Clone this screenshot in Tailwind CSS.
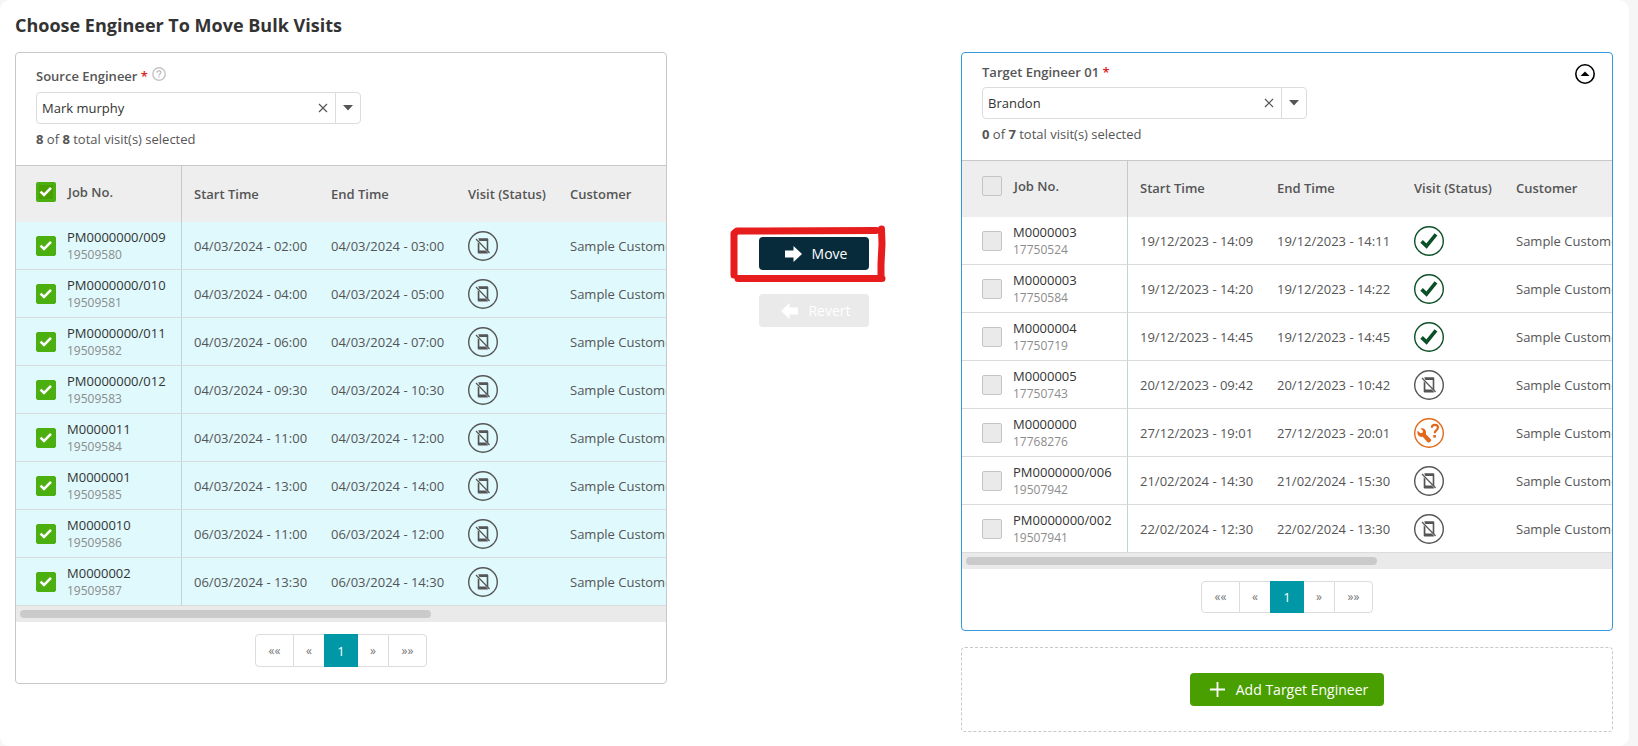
<!DOCTYPE html>
<html lang="en">
<head>
<meta charset="utf-8">
<meta name="viewport" content="width=device-width, initial-scale=1">
<title>Choose Engineer To Move Bulk Visits</title>
<script src="https://cdn.jsdelivr.net/npm/@tailwindcss/browser@4"></script>
</head>
<body class="min-h-screen bg-[#f6f6f6] pr-[9px] font-['Open_Sans',sans-serif] text-[13px] leading-5 text-[#555]">

<svg class="hidden" aria-hidden="true">
  <symbol id="i-nophone" viewBox="0 0 30 30">
    <circle cx="15" cy="15" r="14.3" fill="none" stroke="currentColor" stroke-width="1.4"/>
    <path d="M10.2 7.2h8.800c.8 0 1.300.5 1.300 1.200v12.400l-1.600-1.700v-9h-7.300z" fill="currentColor"/>
    <path d="M9.700 11.200l1.700 1.800v6.600h6.400l2.300 2.400c-.2.400-.6.600-1.100.6h-8c-.7 0-1.300-.5-1.300-1.200z" fill="currentColor"/>
    <path d="M8 8l13.600 14" stroke="currentColor" stroke-width="1.2" fill="none"/>
  </symbol>
  <symbol id="i-done" viewBox="0 0 30 30">
    <circle cx="15" cy="15" r="14.3" fill="none" stroke="currentColor" stroke-width="1.4"/>
    <path d="M7.6 15.400l4.900 4.700L22 8.400" fill="none" stroke="currentColor" stroke-width="3.600"/>
  </symbol>
  <symbol id="i-query" viewBox="0 0 30 30">
    <circle cx="15" cy="15" r="14.3" fill="none" stroke="currentColor" stroke-width="1.4"/>
    <path d="M5.2 11.2l2.7 2.6 2.1-.5.5-2-2.6-2.4c1.7-.5 3.6-.1 4.7 1.3 1 1.3 1.2 2.8.7 4.200l5 5.300c.6.6.6 1.500 0 2.100l-1.200 1c-.6.6-1.500.5-2-.1l-4.900-5.400c-1.500.4-3.200 0-4.200-1.300-1.200-1.300-1.400-3.200-.8-4.800z" transform="translate(-1.500 1.500)" fill="currentColor"/>
    <path d="M17.800 9.800c0-1.800 1.300-2.900 3.100-2.900s3.100 1.100 3.100 2.700c0 2.600-3.300 2.500-3.300 5.600" fill="none" stroke="currentColor" stroke-width="2.100"/>
    <rect x="19.300" y="17" width="2.600" height="2.600" fill="currentColor"/>
  </symbol>
  <symbol id="i-tick" viewBox="0 0 20 20">
    <path d="M4.500 9.600l3.500 3.300 7-7.100" fill="none" stroke="currentColor" stroke-width="2.600"/>
  </symbol>
  <symbol id="i-clear" viewBox="0 0 10 10">
    <path d="M1 1l8 8M9 1L1 9" fill="none" stroke="currentColor" stroke-width="1.200"/>
  </symbol>
  <symbol id="i-caret" viewBox="0 0 10 6">
    <path d="M0 0h10L5 5.500z" fill="currentColor"/>
  </symbol>
  <symbol id="i-arrow" viewBox="0 0 17 16">
    <path d="M0 4.500h8.500V0l8.500 8-8.500 8v-4.500H0z" fill="currentColor"/>
  </symbol>
</svg>

<main class="min-h-screen rounded-[10px] bg-white px-[15px] pt-[13px] pb-[14px] pr-4">
  <h1 class="mb-[15px] text-[18px] leading-6 font-bold text-[#333]">Choose Engineer To Move Bulk Visits</h1>

  <div class="grid grid-cols-[minmax(0,652fr)_minmax(0,294fr)_minmax(0,652fr)] items-start">

    <section class="overflow-hidden rounded border border-[#c8c8c8]">
      <div class="border-b border-[#c8c8c8] px-5 pt-[13px] pb-4">
        <div class="flex items-center gap-1">
          <label for="source" class="font-semibold">Source Engineer <span class="text-[#e02020]">*</span></label>
          <button type="button" aria-label="Help" class="-mt-1 text-[#c4c4c4]">
            <svg class="size-[14px]" viewBox="0 0 14 14" fill="none" stroke="currentColor" stroke-width="1.400"><circle cx="7" cy="7" r="6.200"/><path d="M5.100 5.700c0-1.200.8-1.900 1.900-1.900s1.900.7 1.900 1.700c0 1.300-1.900 1.300-1.900 2.900M7 9.200v1.400"/></svg>
          </button>
        </div>
        <div class="mt-[6px] flex h-8 max-w-[325px] rounded border border-[#dcdcdc]">
          <input id="source" type="text" value="Mark murphy" class="min-w-0 flex-1 bg-transparent pl-[5px] text-[#333] outline-none">
          <button type="button" aria-label="Clear source engineer" class="grid w-6 place-items-center"><svg class="size-[10px]"><use href="#i-clear"/></svg></button>
          <button type="button" aria-label="Show engineers" class="grid w-[25px] place-items-center border-l border-[#dcdcdc]"><svg class="h-[6px] w-[10px]"><use href="#i-caret"/></svg></button>
        </div>
        <p class="mt-[5px]"><b>8</b> of <b>8</b> total visit(s) selected</p>
      </div>
      <div class="overflow-hidden">
        <table class="w-[1014px] table-fixed border-separate border-spacing-0 text-left">
          <colgroup><col class="w-[166px]"><col class="w-[137px]"><col class="w-[137px]"><col class="w-[102px]"><col></colgroup>
          <thead class="bg-[#eee]">
            <tr class="h-14">
              <th class="border-r border-[#c8c8c8] pb-1 pl-5 font-semibold">
                <label class="flex items-center gap-3">
                  <span class="grid size-5"><input type="checkbox" checked class="peer col-start-1 row-start-1 size-5 appearance-none rounded-xs border border-[#c4c4c4] bg-[#eaeaea] checked:border-[3px] checked:border-[#4caf10] checked:bg-[#4a9f00]"><svg class="pointer-events-none col-start-1 row-start-1 hidden size-5 text-white peer-checked:block"><use href="#i-tick"/></svg></span>
                  Job No.
                </label>
              </th>
              <th class="pl-3 font-semibold">Start Time</th><th class="pl-3 font-semibold">End Time</th><th class="pl-3 font-semibold">Visit (Status)</th><th class="pl-3 font-semibold">Customer</th>
            </tr>
          </thead>
          <tbody id="source-rows" class="bg-[#dff9fd]"></tbody>
        </table>
      </div>
      <div class="h-4 bg-[#eaeaea] px-1 py-1"><div class="h-2 w-[64%] rounded-full bg-[#cacaca]"></div></div>
      <nav aria-label="Source visit pages" class="flex justify-center pt-3 pb-4">
        <div class="flex h-[33px] text-[12px] text-[#777]">
          <button type="button" aria-label="First page" class="w-[39px] rounded-l border border-[#dcdcdc]">««</button>
          <button type="button" aria-label="Previous page" class="w-[30px] border-y border-[#dcdcdc]">«</button>
          <button type="button" aria-current="page" class="w-[34px] bg-[#0098a6] text-[13px] font-medium text-white">1</button>
          <button type="button" aria-label="Next page" class="w-[30px] border-y border-[#dcdcdc]">»</button>
          <button type="button" aria-label="Last page" class="w-[39px] rounded-r border border-[#dcdcdc]">»»</button>
        </div>
      </nav>
    </section>

    <div class="flex flex-col items-center gap-6 pt-[185px] text-[14px] font-medium text-white">
      <div class="relative">
        <button type="button" class="flex h-[33px] w-[110px] items-center justify-center gap-[10px] rounded bg-[#072b3a] pl-1">
          <svg class="h-4 w-[17px]"><use href="#i-arrow"/></svg>Move
        </button>
        <svg class="pointer-events-none absolute -top-[13px] -left-[30px] h-[60px] w-[158px]" viewBox="0 0 158 60" fill="none" stroke="#e71c1c" stroke-width="7" stroke-linecap="round" stroke-linejoin="round" aria-hidden="true">
          <path d="M5 51L5 9.500L8 7L147 6.500M152.500 5L153 20L152 40L152 51M9 54.500L153 54.500"/>
        </svg>
      </div>
      <button type="button" disabled class="flex h-[33px] w-[110px] items-center justify-center gap-[10px] rounded bg-[#eaeaea] pl-1">
        <svg class="h-4 w-[17px] rotate-180"><use href="#i-arrow"/></svg>Revert
      </button>
    </div>

    <div class="flex flex-col gap-4">
      <section class="overflow-hidden rounded border border-[#3498db]">
        <div class="flex items-start justify-between border-b border-[#c8c8c8] pt-[9px] pr-[17px] pb-4 pl-5">
          <div class="max-w-[325px] flex-1">
            <label for="target" class="block font-semibold">Target Engineer 01 <span class="text-[#e02020]">*</span></label>
            <div class="mt-[5px] flex h-8 rounded border border-[#dcdcdc]">
              <input id="target" type="text" value="Brandon" class="min-w-0 flex-1 bg-transparent pl-[5px] text-[#333] outline-none">
              <button type="button" aria-label="Clear target engineer" class="grid w-6 place-items-center"><svg class="size-[10px]"><use href="#i-clear"/></svg></button>
              <button type="button" aria-label="Show engineers" class="grid w-[25px] place-items-center border-l border-[#dcdcdc]"><svg class="h-[6px] w-[10px]"><use href="#i-caret"/></svg></button>
            </div>
            <p class="mt-[5px]"><b>0</b> of <b>7</b> total visit(s) selected</p>
          </div>
          <button type="button" aria-label="Collapse" class="mt-[2px] text-black">
            <svg class="size-5" viewBox="0 0 20 20"><circle cx="10" cy="10" r="9.200" fill="none" stroke="currentColor" stroke-width="1.600"/><path d="M5.500 12L10 7.500l4.500 4.500z" fill="currentColor"/></svg>
          </button>
        </div>
        <div class="overflow-hidden">
          <table class="w-[1014px] table-fixed border-separate border-spacing-0 text-left">
            <colgroup><col class="w-[166px]"><col class="w-[137px]"><col class="w-[137px]"><col class="w-[102px]"><col></colgroup>
            <thead class="bg-[#eee]">
              <tr class="h-14">
                <th class="border-r border-[#c8c8c8] pb-[6px] pl-5 font-semibold">
                  <label class="flex items-center gap-3">
                    <span class="grid size-5"><input type="checkbox" class="peer col-start-1 row-start-1 size-5 appearance-none rounded-xs border border-[#c4c4c4] bg-[#eaeaea] checked:border-[3px] checked:border-[#4caf10] checked:bg-[#4a9f00]"><svg class="pointer-events-none col-start-1 row-start-1 hidden size-5 text-white peer-checked:block"><use href="#i-tick"/></svg></span>
                    Job No.
                  </label>
                </th>
                <th class="pb-[2px] pl-3 font-semibold">Start Time</th><th class="pb-[2px] pl-3 font-semibold">End Time</th><th class="pb-[2px] pl-3 font-semibold">Visit (Status)</th><th class="pb-[2px] pl-3 font-semibold">Customer</th>
              </tr>
            </thead>
            <tbody id="target-rows"></tbody>
          </table>
        </div>
        <div class="h-4 bg-[#eaeaea] px-1 py-1"><div class="h-2 w-[64%] rounded-full bg-[#cacaca]"></div></div>
        <nav aria-label="Target visit pages" class="flex justify-center pt-3 pb-[17px]">
          <div class="flex h-8 text-[12px] text-[#777]">
            <button type="button" aria-label="First page" class="w-[39px] rounded-l border border-[#dcdcdc]">««</button>
            <button type="button" aria-label="Previous page" class="w-[30px] border-y border-[#dcdcdc]">«</button>
            <button type="button" aria-current="page" class="w-[34px] bg-[#0098a6] text-[13px] font-medium text-white">1</button>
            <button type="button" aria-label="Next page" class="w-[30px] border-y border-[#dcdcdc]">»</button>
            <button type="button" aria-label="Last page" class="w-[39px] rounded-r border border-[#dcdcdc]">»»</button>
          </div>
        </nav>
      </section>

      <div class="flex justify-center rounded border border-dashed border-[#c8c8c8] py-[25px]">
        <button type="button" class="flex h-[33px] items-center gap-[11px] rounded bg-[#4a9f00] pr-4 pl-5 text-[14px] font-medium text-white">
          <svg class="size-[15px]" viewBox="0 0 15 15"><path d="M7.500 0v15M0 7.500h15" stroke="currentColor" stroke-width="1.800"/></svg>
          Add Target Engineer
        </button>
      </div>
    </div>
  </div>
</main>

<script>
  const sourceVisits = [
    ['PM0000000/009', '19509580', '04/03/2024 - 02:00', '04/03/2024 - 03:00', 'nophone'],
    ['PM0000000/010', '19509581', '04/03/2024 - 04:00', '04/03/2024 - 05:00', 'nophone'],
    ['PM0000000/011', '19509582', '04/03/2024 - 06:00', '04/03/2024 - 07:00', 'nophone'],
    ['PM0000000/012', '19509583', '04/03/2024 - 09:30', '04/03/2024 - 10:30', 'nophone'],
    ['M0000011', '19509584', '04/03/2024 - 11:00', '04/03/2024 - 12:00', 'nophone'],
    ['M0000001', '19509585', '04/03/2024 - 13:00', '04/03/2024 - 14:00', 'nophone'],
    ['M0000010', '19509586', '06/03/2024 - 11:00', '06/03/2024 - 12:00', 'nophone'],
    ['M0000002', '19509587', '06/03/2024 - 13:30', '06/03/2024 - 14:30', 'nophone']
  ];
  const targetVisits = [
    ['M0000003', '17750524', '19/12/2023 - 14:09', '19/12/2023 - 14:11', 'done'],
    ['M0000003', '17750584', '19/12/2023 - 14:20', '19/12/2023 - 14:22', 'done'],
    ['M0000004', '17750719', '19/12/2023 - 14:45', '19/12/2023 - 14:45', 'done'],
    ['M0000005', '17750743', '20/12/2023 - 09:42', '20/12/2023 - 10:42', 'nophone'],
    ['M0000000', '17768276', '27/12/2023 - 19:01', '27/12/2023 - 20:01', 'query'],
    ['PM0000000/006', '19507942', '21/02/2024 - 14:30', '21/02/2024 - 15:30', 'nophone'],
    ['PM0000000/002', '19507941', '22/02/2024 - 12:30', '22/02/2024 - 13:30', 'nophone']
  ];
  const statusColor = { nophone: 'text-[#555]', done: 'text-[#0b4f26]', query: 'text-[#e2691a]' };
  const cell = 'border-b border-[#d8dcdc] pl-3';

  function render(id, visits, checked) {
    document.getElementById(id).innerHTML = visits.map(([job, ref, start, end, status]) => `
      <tr class="h-12">
        <td class="border-r border-b border-r-[#c3d3d5] border-b-[#d8dcdc] pl-5">
          <label class="flex items-center gap-[11px]">
            <span class="grid size-5"><input type="checkbox" ${checked ? 'checked' : ''} class="peer col-start-1 row-start-1 size-5 appearance-none rounded-xs border border-[#c4c4c4] bg-[#eaeaea] checked:border-[#4caf10] checked:bg-[#4caf10]"><svg class="pointer-events-none col-start-1 row-start-1 hidden size-5 text-white peer-checked:block"><use href="#i-tick"/></svg></span>
            <span class="leading-[18px]"><span class="block text-[#333]">${job}</span><span class="block text-[12px] text-[#8c8c8c]">${ref}</span></span>
          </label>
        </td>
        <td class="${cell}">${start}</td>
        <td class="${cell}">${end}</td>
        <td class="${cell}"><svg class="size-[30px] ${statusColor[status]}" role="img" aria-label="${status}"><use href="#i-${status}"/></svg></td>
        <td class="${cell}">Sample Customer</td>
      </tr>`).join('');
  }
  render('source-rows', sourceVisits, true);
  render('target-rows', targetVisits, false);
</script>
</body>
</html>
